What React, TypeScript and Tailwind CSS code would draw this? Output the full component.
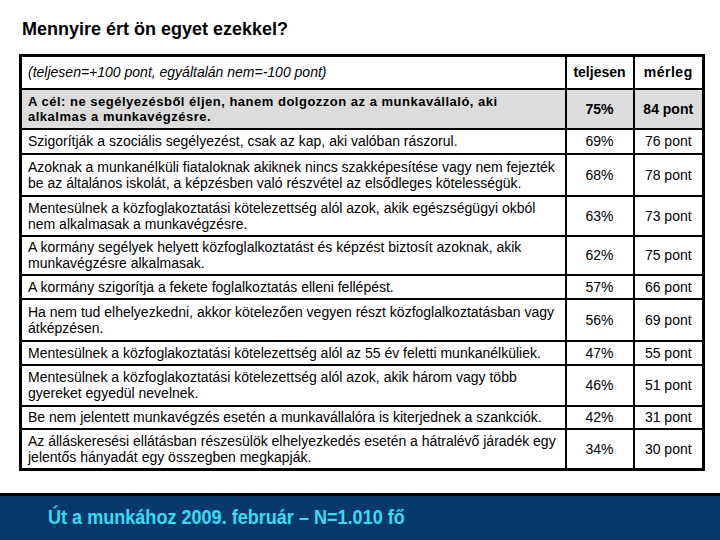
import React from "react";

interface Row {
  lines: string[];
  pct: string;
  pont: string;
  h: number;
}

const rows: Row[] = [
  { lines: ["Szigorítják a szociális segélyezést, csak az kap, aki valóban rászorul."], pct: "69%", pont: "76 pont", h: 25 },
  { lines: ["Azoknak a munkanélküli fiataloknak akiknek nincs szakképesítése vagy nem fejezték", "be az általános iskolát, a képzésben való részvétel az elsődleges kötelességük."], pct: "68%", pont: "78 pont", h: 42 },
  { lines: ["Mentesülnek a közfoglakoztatási kötelezettség alól azok, akik egészségügyi okból", "nem alkalmasak a munkavégzésre."], pct: "63%", pont: "73 pont", h: 40 },
  { lines: ["A kormány segélyek helyett közfoglalkoztatást és képzést biztosít azoknak, akik", "munkavégzésre alkalmasak."], pct: "62%", pont: "75 pont", h: 39 },
  { lines: ["A kormány szigorítja a fekete foglalkoztatás elleni fellépést."], pct: "57%", pont: "66 pont", h: 24 },
  { lines: ["Ha nem tud elhelyezkedni, akkor kötelezően vegyen részt közfoglalkoztatásban vagy", "átképzésen."], pct: "56%", pont: "69 pont", h: 42 },
  { lines: ["Mentesülnek a közfoglakoztatási kötelezettség alól az 55 év feletti munkanélküliek."], pct: "47%", pont: "55 pont", h: 24 },
  { lines: ["Mentesülnek a közfoglakoztatási kötelezettség alól azok, akik három vagy több", "gyereket egyedül nevelnek."], pct: "46%", pont: "51 pont", h: 41 },
  { lines: ["Be nem jelentett munkavégzés esetén a munkavállalóra is kiterjednek a szankciók."], pct: "42%", pont: "31 pont", h: 23 },
  { lines: ["Az álláskeresési ellátásban részesülök elhelyezkedés esetén a hátralévő járadék egy", "jelentős hányadát egy összegben megkapják."], pct: "34%", pont: "30 pont", h: 41 },
];

const App = () => {
  return (
    <div
      className="w-[720px] h-[540px] bg-white flex flex-col overflow-hidden text-black"
      style={{ fontFamily: '"Liberation Sans", Arial, sans-serif' }}
    >
      <h1 className="text-[18px] font-bold pl-[22px] pt-[18px] h-[54px] leading-[22px]">
        Mennyire ért ön egyet ezekkel?
      </h1>
      <div className="pl-[19px]">
        <table className="w-[683px] border-collapse border-[3px] border-black text-[14px] leading-[16px] table-fixed">
          <colgroup>
            <col className="w-[545px]" />
            <col className="w-[68px]" />
            <col className="w-[70px]" />
          </colgroup>
          <tbody>
            <tr className="h-[33px]">
              <td className="border-2 border-black pl-[6px] italic">
                (teljesen=+100 pont, egyáltalán nem=-100 pont)
              </td>
              <td className="border-2 border-black text-center font-bold">teljesen</td>
              <td className="border-2 border-black text-center font-bold tracking-[0.5px]">mérleg</td>
            </tr>
            <tr className="h-[40px] bg-[#dcdcdc] font-bold">
              <td className="border-2 border-black pl-[6px] text-[13px] leading-[15px] tracking-[0.5px]">
                A cél: ne segélyezésből éljen, hanem dolgozzon az a munkavállaló, aki
                <br />
                alkalmas a munkavégzésre.
              </td>
              <td className="border-2 border-black text-center">75%</td>
              <td className="border-2 border-black text-center">84 pont</td>
            </tr>
            {rows.map((r) => (
              <tr key={r.pct} style={{ height: r.h }}>
                <td className="border-2 border-black pl-[6px] whitespace-nowrap overflow-hidden">
                  {r.lines.map((l, i) => (
                    <div key={i}>{l}</div>
                  ))}
                </td>
                <td className="border-2 border-black text-center">{r.pct}</td>
                <td className="border-2 border-black text-center">{r.pont}</td>
              </tr>
            ))}
          </tbody>
        </table>
      </div>
      <div className="mt-auto h-[47px] border-t-[3px] border-black bg-[#073a6c] flex items-center pl-[48px] pb-[2px]">
        <span className="text-[21px] font-bold text-[#35dcf2] whitespace-nowrap inline-block origin-left scale-x-[0.86]">
          Út a munkához 2009. február – N=1.010 fő
        </span>
      </div>
    </div>
  );
};

export default App;
